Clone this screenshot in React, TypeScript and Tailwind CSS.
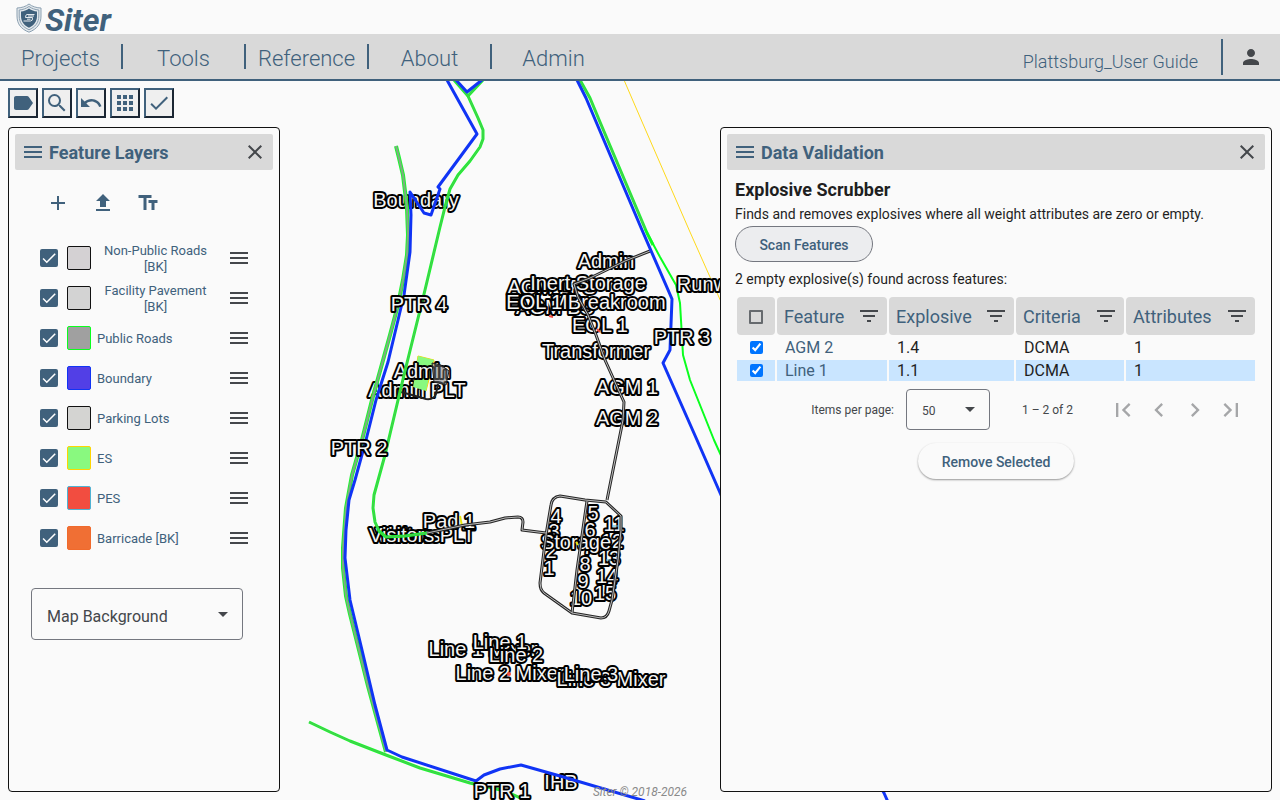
import { useState } from 'react';
import type { ReactNode } from 'react';
import {
  MdAdd,
  MdApps,
  MdArrowDropDown,
  MdCheck,
  MdChevronLeft,
  MdChevronRight,
  MdClose,
  MdFilterList,
  MdFirstPage,
  MdLabel,
  MdLastPage,
  MdMenu,
  MdPerson,
  MdSearch,
  MdTextFields,
  MdUndo,
  MdUpload,
} from 'react-icons/md';

const NAV = ['Projects', 'Tools', 'Reference', 'About', 'Admin'];

const TOOLS = [
  { label: 'Labels', icon: <MdLabel size={24} /> },
  { label: 'Search', icon: <MdSearch size={24} /> },
  { label: 'Undo', icon: <MdUndo size={24} /> },
  { label: 'Grid', icon: <MdApps size={24} /> },
  { label: 'Validate', icon: <MdCheck size={24} /> },
];

const LAYERS = [
  { name: 'Non-Public Roads [BK]', swatch: 'bg-[#d4d1d3] border-[#111111]' },
  { name: 'Facility Pavement [BK]', swatch: 'bg-[#d3d3d3] border-[#111111]' },
  { name: 'Public Roads', swatch: 'bg-[#a0a0a0] border-[#0aff1e]' },
  { name: 'Boundary', swatch: 'bg-[#523fe6] border-[#1034f5]' },
  { name: 'Parking Lots', swatch: 'bg-[#d4d4d2] border-[#111111]' },
  { name: 'ES', swatch: 'bg-[#89f97f] border-[#ffd400]' },
  { name: 'PES', swatch: 'bg-[#f24d40] border-[#4fb3d4]' },
  { name: 'Barricade [BK]', swatch: 'bg-[#f06f34] border-[#f06a2c]' },
];

const COLUMNS = [
  { label: 'Feature', width: 'w-[110px]' },
  { label: 'Explosive', width: 'w-[125px]' },
  { label: 'Criteria', width: 'w-[108px]' },
  { label: 'Attributes', width: '' },
];

const ROWS = [
  { feature: 'AGM 2', explosive: '1.4', criteria: 'DCMA', attributes: '1' },
  { feature: 'Line 1', explosive: '1.1', criteria: 'DCMA', attributes: '1' },
];

type MapLabel = [text: string, x: number, y: number];

// Labels that the roads and the boundary run over
const LOWER_LABELS: MapLabel[] = [
  ['Boundary', 416, 207],
  ['Admin PLT', 417, 397],
  ['Admin', 422, 378],
  ['Visitors', 408, 542],
  ['Visitors PLT', 422, 542],
  ['Pad 1', 449, 528],
  ['IHB', 561, 789],
  ['Admin', 606, 268],
  ['AGM LPS', 552, 294],
  ['AGM BS', 555, 314],
  ['Inert Storage', 588, 290],
  ['EOL Mix', 544, 309],
  ['EOL 1 Breakroom', 586, 309],
  ['EOL 1', 600, 332],
  ['Transformer', 596, 358],
  ['AGM 1', 627, 394],
  ['AGM 2', 627, 425],
  ['3', 554, 538],
  ['4', 556, 523],
  ['2', 551, 558],
  ['1', 549, 575],
  ['7', 588, 554],
  ['5', 593, 520],
  ['6', 590, 537],
  ['8', 585, 571],
  ['9', 583, 588],
  ['10', 581, 605],
  ['12', 612, 548],
  ['11', 614, 531],
  ['13', 609, 565],
  ['14', 607, 583],
  ['15', 605, 600],
  ['Storage', 576, 549],
];

const UPPER_LABELS: MapLabel[] = [
  ['PTR 4', 419, 311],
  ['PTR 2', 359, 455],
  ['PTR 3', 682, 344],
  ['PTR 1', 502, 798],
  ['Runway', 713, 291],
  ['Line 1 Mixer', 483, 656],
  ['Line 1', 500, 649],
  ['Line 2', 516, 662],
  ['Line 2 Mixer', 510, 680],
  ['Line 3 Mixer', 611, 686],
  ['Line 3', 591, 681],
];

const WIDE_ROADS = [
  'M396 146 L399 158 L403 175 L407 208 L408 235 L407 255 L403 280 L398 305 L390 335 L372 400 L362 440 L352 475 L346 508 L343 548 L343 568 L346 596 L350 614 L358 646 L368 686 L386 752',
];

const NARROW_ROADS = [
  'M580 80 L590 98 L600 122 L647 233 L653 245',
  'M454 80 L468 96 L483 80',
  'M468 96 L478 118 L483 130 L483 139 L480 147 L470 161 L458 175 L450 189 L445 207 L440 227 L425 290 L404 375 L385 455 L374 495 L373 508 L375 522 L379 531 L386 537 L405 536 L427 533',
  'M309 722 L330 732 L350 741 L386 755 L420 768 L470 783 L505 791 L525 800',
];

const SERVICE_ROADS = [
  'M650 251 L625 261 L590 278 L574 284 L578 297 L588 315 L596 335 L605 360 L614 380 L624 402 L623 420 L607 500',
  'M427 533 L465 525 L490 522 L505 518 L518 517 Q523 517 523 522 L522 530 L546 533',
  'M606 502 L585 500 L560 496 Q552 497 551 505 L546 535 L540 583 Q540 590 544 593 L572 613 L601 618 Q607 618 609 611 L612 600 L618 560 L621 530 V516 Z',
  'M587 501 L577 570 L572 613',
];

const BOUNDARY = [
  'M447 80 L477 134 L438 187 L440 189 L431 215 L424 213 L410 192 L411 215 L410 252 L404 295 L388 362 L376 400 L366 440 L355 480 L349 500 L346 530 L345 558 L350 600 L362 650 L375 705 L387 750 L402 757 L476 781 L484 775 L500 769 L521 765 L560 776 L645 801',
  'M456 80 L467 92 L482 80',
  'M577 80 L586 98 L597 124 L642 230 L672 299 L670 350 L663 363 L697 440 L721 495 L884 793 L888 802',
];

function MapLabels({ labels }: { labels: MapLabel[] }) {
  return (
    <g
      className="font-['Liberation_Sans',Arial,sans-serif] text-[20px]"
      fill="#f5f5f5"
      stroke="#000"
      strokeWidth="4"
      strokeLinejoin="round"
      paintOrder="stroke"
      textAnchor="middle"
    >
      {labels.map(([text, x, y]) => (
        <text key={`${text}-${x}-${y}`} x={x} y={y}>
          {text}
        </text>
      ))}
    </g>
  );
}

function SiteMap() {
  return (
    <svg className="absolute inset-0 h-full w-full" fill="none" aria-label="Site map">
      <path d="M418 356 L434 360 L426 391 L413 387 Z" fill="#89f97f" stroke="#ffd400" />
      <MapLabels labels={LOWER_LABELS} />

      {/* ES, PES and barricade footprints */}
      <path d="M418 356 L434 360 L432 365 L417 362 Z" fill="#89f97f" />
      <path d="M414 381 L428 381 L426 391 L413 387 Z" fill="#89f97f" />
      <path d="M432 363 L441 365 L449 371 L446 385 L434 382 Z" fill="#777" fillOpacity="0.5" stroke="#222" />
      <path d="M401 392 L412 395 L426 399 Q434 400 436 394 L438 384" stroke="#222" strokeWidth="2" />
      <path d="M460 516 L462 526" stroke="#e8e814" strokeWidth="2" />
      <path d="M549 316 L553 317" stroke="#f24d40" strokeWidth="2" />
      <path d="M597 329 L600 332" stroke="#f24d40" strokeWidth="2" />
      <path d="M613 526 H618 M606 560 H611" stroke="#4fb3d4" />
      <path d="M576 542 L578 545" stroke="#e8e814" strokeWidth="2" />

      <g strokeLinejoin="round">
        <path d="M624 80 L643 124 L690 232 L722 304" stroke="#ffd91a" />
        {WIDE_ROADS.map((d) => (
          <g key={d}>
            <path d={d} stroke="#1df52e" strokeWidth="4" />
            <path d={d} stroke="#999" strokeOpacity="0.8" strokeWidth="2" />
          </g>
        ))}
        {NARROW_ROADS.map((d) => (
          <g key={d}>
            <path d={d} stroke="#1df52e" strokeWidth="3" />
            <path d={d} stroke="#888" strokeOpacity="0.5" />
          </g>
        ))}
        <path
          d="M645 229 L660 257 L676 285 L680 303 L683 355 L690 380 L714 440 L724 462"
          stroke="#0aff1e"
          strokeWidth="2"
        />
        {SERVICE_ROADS.map((d) => (
          <path key={d} d={d} stroke="#262626" strokeWidth="3" />
        ))}
        {SERVICE_ROADS.map((d) => (
          <path key={d} d={d} stroke="#bdbdbd" />
        ))}
        {BOUNDARY.map((d) => (
          <path key={d} d={d} stroke="#1034f5" strokeWidth="3" />
        ))}
      </g>

      <MapLabels labels={UPPER_LABELS} />
      <circle cx="509" cy="674" r="2" fill="#f24d40" />
    </svg>
  );
}

function Logo() {
  return (
    <svg width="26" height="30" viewBox="0 0 26 30" fill="none" aria-hidden="true">
      <path
        d="M13 1 C10 3.5 5 5 1 5 V13 C1 21 5 26 13 29.2 C21 26 25 21 25 13 V5 C21 5 16 3.5 13 1 Z"
        fill="#e4e9ed"
        stroke="#8ba0b1"
      />
      <path
        d="M13 3.5 C10 5.6 7 6.6 3.2 7 V13 C3.2 20 7 24 13 26.8 C19 24 22.8 20 22.8 13 V7 C19 6.6 16 5.6 13 3.5 Z"
        stroke="#8ba0b1"
      />
      <path
        d="M13 5.5 C10.5 7.3 8 8.3 5 8.6 V13 C5 18.5 8 22.5 13 24.8 C18 22.5 21 18.5 21 13 V8.6 C18 8.3 15.5 7.3 13 5.5 Z"
        fill="#40617c"
      />
      <path d="M18.5 11.5 H11 Q9.500 11.500 9.500 14.500 H16.500 Q17 18 14.500 18 H7.500 M11 16.200 H14.500 M12 13 H18" stroke="#e4e9ed" />
    </svg>
  );
}

function Panel({ title, className, children }: { title: string; className: string; children: ReactNode }) {
  return (
    <section
      className={`${className} flex shrink-0 flex-col rounded border border-[#111111] bg-[#fafafa] p-1.5`}
      aria-label={title}
    >
      <header className="flex h-9 shrink-0 items-center rounded-xs bg-[#d9d9d9] px-1.5 text-[#40617c]">
        <MdMenu size={24} />
        <h2 className="ml-1 flex-1 pt-px text-[18px] font-bold">{title}</h2>
        <button type="button" aria-label={`Close ${title}`} className="text-[#44474b]">
          <MdClose size={24} />
        </button>
      </header>
      {children}
    </section>
  );
}

function LayerRow({ name, swatch }: { name: string; swatch: string }) {
  const [checked, setChecked] = useState(true);
  return (
    <li className="flex h-10 items-center text-[#40617c]">
      <label className="flex flex-1 items-center text-[13px] leading-4">
        <span className="grid size-[18px] place-items-center">
          <input
            type="checkbox"
            checked={checked}
            onChange={(e) => setChecked(e.target.checked)}
            className="col-start-1 row-start-1 size-[18px] appearance-none rounded-xs border-2 border-[#40617c] checked:bg-[#40617c]"
          />
          {checked && <MdCheck size={18} className="pointer-events-none col-start-1 row-start-1 text-white" />}
        </span>
        <span className={`ml-[9px] size-6 shrink-0 rounded-xs border ${swatch}`} />
        <span className="ml-1.5 max-w-[117px] pt-px text-center">{name}</span>
      </label>
      <button type="button" aria-label={`Reorder ${name}`} className="text-[#44474b]">
        <MdMenu size={24} />
      </button>
    </li>
  );
}

function FeatureLayers() {
  return (
    <Panel title="Feature Layers" className="w-[272px]">
      <div className="mt-[21px] ml-[31px] flex gap-[21px] text-[#40617c]">
        <button type="button" aria-label="Add layer"><MdAdd size={24} /></button>
        <button type="button" aria-label="Upload layer"><MdUpload size={24} /></button>
        <button type="button" aria-label="Label text"><MdTextFields size={24} /></button>
      </div>
      <ul className="mt-[23px] mr-[22px] ml-[25px]">
        {LAYERS.map((layer) => (
          <LayerRow key={layer.name} {...layer} />
        ))}
      </ul>
      <div className="relative mt-[30px] mr-[30px] ml-4">
        <select
          aria-label="Map Background"
          defaultValue=""
          className="h-[52px] w-full appearance-none rounded border border-[#74777f] pt-1.5 pl-[15px] text-base text-[#44474b]"
        >
          <option value="">Map Background</option>
        </select>
        <MdArrowDropDown size={24} className="pointer-events-none absolute top-3.5 right-2 text-[#44474b]" />
      </div>
    </Panel>
  );
}

function ResultsTable() {
  const [selected, setSelected] = useState([true, true]);
  return (
    <table className="w-full table-fixed border-separate border-spacing-[2px] text-left text-base">
      <thead>
        <tr>
          <th className="h-[38px] w-[38px] rounded bg-[#d9d9d9] text-center">
            <input
              type="checkbox"
              aria-label="Select all"
              className="size-3.5 appearance-none rounded-[1px] border-2 border-[#666a6e] align-middle"
            />
          </th>
          {COLUMNS.map(({ label, width }) => (
            <th key={label} className={`${width} rounded bg-[#d9d9d9] pr-1.5 pl-[7px] text-[18px] font-normal text-[#40617c]`}>
              <div className="flex items-center justify-between">
                {label}
                <button type="button" aria-label={`Filter ${label}`} className="text-[#44474b]">
                  <MdFilterList size={24} />
                </button>
              </div>
            </th>
          ))}
        </tr>
      </thead>
      <tbody>
        {ROWS.map((row, i) => (
          <tr key={row.feature} className="leading-[21px] even:[&>td]:bg-[#c9e5ff]">
            <td className="text-center">
              <input
                type="checkbox"
                aria-label={`Select ${row.feature}`}
                checked={selected[i]}
                onChange={() => setSelected(selected.map((s, n) => (n === i ? !s : s)))}
                className="mx-auto block size-[13px]"
              />
            </td>
            <td className="pl-2 text-[#40617c]">{row.feature}</td>
            <td className="pl-2">{row.explosive}</td>
            <td className="pl-2">{row.criteria}</td>
            <td className="pl-2">{row.attributes}</td>
          </tr>
        ))}
      </tbody>
    </table>
  );
}

function DataValidation() {
  return (
    <Panel title="Data Validation" className="w-[552px]">
      <div className="flex flex-col px-2 pt-2 text-[#1f1f1f]">
        <h3 className="text-[18px] leading-6 font-bold">Explosive Scrubber</h3>
        <p className="text-sm leading-6">Finds and removes explosives where all weight attributes are zero or empty.</p>
        <button
          type="button"
          className="h-9 w-[138px] rounded-full border border-[#74777f] bg-[#ecedef] pt-0.5 text-sm font-medium text-[#40617c]"
        >
          Scan Features
        </button>
        <p className="mt-[5px] mb-1 text-sm leading-6">2 empty explosive(s) found across features:</p>

        <ResultsTable />

        <div className="mt-1.5 mr-2 flex items-center justify-end text-xs text-[#44474b]">
          <label htmlFor="page-size">Items per page:</label>
          <div className="relative ml-3">
            <select
              id="page-size"
              className="h-[41px] w-[84px] appearance-none rounded border border-[#74777f] pt-0.5 pl-[15px] text-xs"
            >
              <option>50</option>
            </select>
            <MdArrowDropDown size={24} className="pointer-events-none absolute top-2 right-2" />
          </div>
          <span className="mr-8 ml-8">1 – 2 of 2</span>
          <div className="flex text-[#a5a6a8]">
            <button type="button" aria-label="First page" className="px-1"><MdFirstPage size={28} /></button>
            <button type="button" aria-label="Previous page" className="px-1"><MdChevronLeft size={28} /></button>
            <button type="button" aria-label="Next page" className="px-1"><MdChevronRight size={28} /></button>
            <button type="button" aria-label="Last page" className="px-1"><MdLastPage size={28} /></button>
          </div>
        </div>

        <button
          type="button"
          className="mt-[13px] h-9 w-[156px] self-center rounded-full bg-[#fafafa] pt-0.5 text-sm font-medium text-[#40617c] shadow-[0_1px_2px_rgba(0,0,0,0.4)]"
        >
          Remove Selected
        </button>
      </div>
    </Panel>
  );
}

export default function App() {
  return (
    <div className="relative flex h-screen flex-col overflow-hidden bg-[#fafafa] font-[Roboto,sans-serif]">
      <SiteMap />

      <header className="relative bg-[#fafafa] text-[#40617c]">
        <div className="flex h-[34px] items-center pt-0.5 pl-4">
          <Logo />
          <h1 className="ml-[3px] pt-1 text-[32px] leading-[34px] font-bold italic">Siter</h1>
        </div>
        <nav className="flex h-[47px] items-center border-b-2 border-[#40617c] bg-[#d9d9d9]">
          {NAV.map((item) => (
            <a
              key={item}
              href={`#${item.toLowerCase()}`}
              className="h-[25px] w-[123px] border-r-2 border-[#40617c] pt-0.5 text-center text-[22px] leading-[25px] font-light last-of-type:border-r-0"
            >
              {item}
            </a>
          ))}
          <span className="mt-2.5 mr-[23px] ml-auto text-[18px] font-light">Plattsburg_User Guide</span>
          <div className="flex h-9 items-center border-l-2 border-[#40617c] pr-[17px] pl-4">
            <button type="button" aria-label="Account" className="text-[#44474b]">
              <MdPerson size={24} />
            </button>
          </div>
        </nav>
      </header>

      <main className="relative flex flex-1 flex-col p-2 pt-[7px]">
        <div className="flex gap-1">
          {TOOLS.map(({ label, icon }) => (
            <button
              key={label}
              type="button"
              aria-label={label}
              className="flex size-[30px] items-center justify-center border-2 border-t-[#40617c] border-r-[#1b2633] border-b-[#1b2633] border-l-[#40617c] bg-[#efefef] text-[#40617c]"
            >
              {icon}
            </button>
          ))}
        </div>
        <div className="mt-[9px] flex flex-1 justify-between">
          <FeatureLayers />
          <DataValidation />
        </div>
      </main>

      <footer className="absolute bottom-0 w-full text-center text-xs text-[#8a8a8a] italic">Siter © 2018-2026</footer>
    </div>
  );
}
